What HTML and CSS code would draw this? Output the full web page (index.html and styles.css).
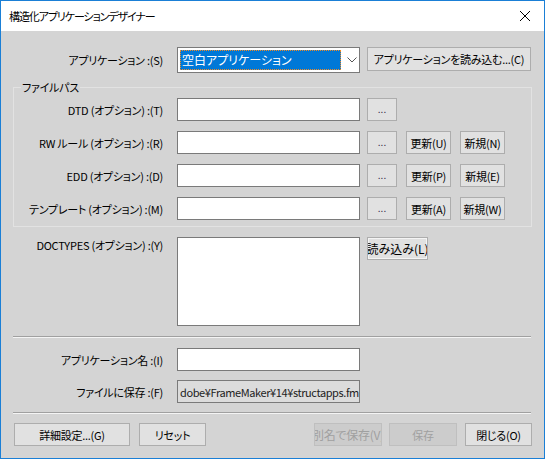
FILE: index.html
```html
<!DOCTYPE html>
<html lang="ja">
<head>
<meta charset="utf-8">
<title>構造化アプリケーションデザイナー</title>
<link rel="stylesheet" href="styles.css">
</head>
<body>
<div class="window">
  <div class="titlebar">
    <span class="title">構造化アプリケーションデザイナー</span>
    <svg class="close" width="12" height="12" viewBox="0 0 12 12"><path d="M1 1 L11 11 M11 1 L1 11" stroke="#000" stroke-width="1" fill="none"/></svg>
  </div>
  <div class="content">
    <div class="row app-row">
      <div class="label">アプリケーション :(S)</div>
      <div class="select">
        <div class="select-value">空白アプリケーション</div>
        <svg class="chevron" width="10" height="6" viewBox="0 0 10 6"><path d="M0.5 0.5 L5 5 L9.5 0.5" stroke="#555" stroke-width="1" fill="none"/></svg>
      </div>
      <div class="btn btn-load">アプリケーションを読み込む...(C)</div>
    </div>

    <div class="group">
      <div class="group-title">ファイルパス</div>
      <div class="row">
        <div class="label glabel">DTD (オプション) :(T)</div>
        <div class="field"></div>
        <div class="btn btn-dots">...</div>
      </div>
      <div class="row">
        <div class="label glabel">RW ルール (オプション) :(R)</div>
        <div class="field"></div>
        <div class="btn btn-dots">...</div>
        <div class="btn btn-upd">更新(U)</div>
        <div class="btn btn-new">新規(N)</div>
      </div>
      <div class="row">
        <div class="label glabel">EDD (オプション) :(D)</div>
        <div class="field"></div>
        <div class="btn btn-dots">...</div>
        <div class="btn btn-upd">更新(P)</div>
        <div class="btn btn-new">新規(E)</div>
      </div>
      <div class="row">
        <div class="label glabel">テンプレート (オプション) :(M)</div>
        <div class="field"></div>
        <div class="btn btn-dots">...</div>
        <div class="btn btn-upd">更新(A)</div>
        <div class="btn btn-new">新規(W)</div>
      </div>
    </div>

    <div class="row doc-row">
      <div class="label doc-label">DOCTYPES (オプション) :(Y)</div>
      <div class="listbox"></div>
      <div class="btn btn-read"><span>読み込み(L)</span></div>
    </div>

    <div class="sep sep1"></div>

    <div class="row name-row">
      <div class="label">アプリケーション名 :(I)</div>
      <div class="field"></div>
    </div>
    <div class="row file-row">
      <div class="label">ファイルに保存 :(F)</div>
      <div class="field readonly"><span class="ro-text">dobe¥FrameMaker¥14¥structapps.fm</span></div>
    </div>

    <div class="sep sep2"></div>

    <div class="footer">
      <div class="btn b-adv">詳細設定...(G)</div>
      <div class="btn b-reset">リセット</div>
      <div class="spacer"></div>
      <div class="btn disabled b-saveas"><span>別名で保存(V)</span></div>
      <div class="btn disabled b-save">保存</div>
      <div class="btn b-close">閉じる(O)</div>
    </div>
  </div>
</div>
</body>
</html>
```

FILE: styles.css
```css
html, body {
  margin: 0;
  padding: 0;
}
body {
  font-family: "Noto Sans CJK JP", "Noto Sans", sans-serif;
  font-size: 11px;
  letter-spacing: -0.25px;
  font-feature-settings: "palt";
  color: #000;
  background: #d4d4d4;
}
.window {
  width: 545px;
  height: 459px;
  box-sizing: border-box;
  border: 1px solid #1a7fd6;
  background: #d4d4d4;
  overflow: hidden;
}
.titlebar {
  height: 30px;
  background: #fff;
  display: flex;
  align-items: center;
  padding-left: 8px;
  padding-right: 13px;
}
.title {
  flex: 1;
  font-size: 11px;
  letter-spacing: -1.1px;
  line-height: 16px;
}
.close {
  display: block;
}
.content {
  padding-top: 16px;
}
.row {
  display: flex;
  align-items: center;
  height: 23px;
}
.label {
  width: 162px;
  flex: none;
  text-align: right;
  white-space: nowrap;
  margin-right: 14px;
  line-height: 16px;
}
.glabel {
  width: 149px;
}
.app-row {
  height: 26px;
  align-items: flex-start;
}
.app-row .label {
  line-height: 26px;
}
.select {
  width: 183px;
  height: 26px;
  box-sizing: border-box;
  border: 1px solid #7a7a7a;
  background: #fff;
  display: flex;
  align-items: center;
  padding: 2px;
  flex: none;
}
.select-value {
  width: 161px;
  height: 20px;
  box-sizing: border-box;
  background: #0078d7;
  color: #fff;
  border: 1px dotted #f08a24;
  line-height: 18px;
  padding-left: 1px;
  font-size: 12px;
  letter-spacing: 0;
  white-space: nowrap;
  overflow: hidden;
}
.chevron {
  margin-left: 6px;
}
.btn {
  box-sizing: border-box;
  height: 23px;
  background: #e1e1e1;
  border: 1px solid #adadad;
  display: flex;
  align-items: center;
  justify-content: center;
  white-space: nowrap;
  overflow: hidden;
  flex: none;
  line-height: 16px;
}
.btn-load {
  margin-left: 7px;
  width: 164px;
  height: 24px;
}
.field {
  width: 183px;
  height: 23px;
  box-sizing: border-box;
  border: 1px solid #7a7a7a;
  background: #fff;
  flex: none;
}
.btn-dots {
  width: 30px;
  margin-left: 7px;
  color: #3a2a4a;
  align-items: flex-end;
  padding-bottom: 3px;
  font-size: 10px;
  letter-spacing: 0;
}
.btn-upd {
  width: 45px;
  margin-left: 9px;
}
.btn-new {
  width: 45px;
  margin-left: 9px;
}
.group {
  position: relative;
  margin-top: 14px;
  margin-left: 12px;
  width: 519px;
  box-sizing: border-box;
  border: 1px solid #e2e2e2;
  padding-top: 10px;
  padding-bottom: 6px;
  display: flex;
  flex-direction: column;
  gap: 10px;
}
.group-title {
  position: absolute;
  top: -9px;
  left: 7px;
  padding: 0 1px;
  background: #d4d4d4;
  line-height: 16px;
}
.doc-row {
  margin-top: 10px;
  height: 89px;
  align-items: flex-start;
}
.doc-label {
  line-height: 16px;
  padding-top: 0;
}
.listbox {
  width: 183px;
  height: 89px;
  box-sizing: border-box;
  border: 1px solid #7a7a7a;
  background: #fff;
  flex: none;
}
.btn-read {
  width: 61px;
  margin-left: 7px;
  border-color: #adadad;
  box-shadow: inset 0 0 0 1px #f4f4f4;
  font-size: 12px;
  letter-spacing: 0;
}
.sep {
  margin-left: 12px;
  width: 518px;
  height: 0;
  border-top: 1px solid #a0a0a0;
  border-bottom: 1px solid #f4f4f4;
}
.sep1 {
  margin-top: 10px;
}
.name-row {
  margin-top: 10px;
}
.file-row {
  margin-top: 9px;
}
.readonly {
  background: #dcdcdc;
  overflow: hidden;
  display: flex;
  align-items: center;
  padding-left: 2px;
}
.ro-text {
  white-space: nowrap;
  color: #222;
  letter-spacing: -0.4px;
}
.sep2 {
  margin-top: 9px;
}
.footer {
  display: flex;
  margin-top: 9px;
  padding-left: 13px;
  padding-right: 12px;
}
.spacer {
  flex: 1;
}
.b-adv {
  width: 116px;
}
.b-reset {
  width: 67px;
  margin-left: 9px;
}
.b-saveas {
  width: 68px;
  font-size: 12px;
}
.b-save {
  width: 68px;
  margin-left: 7px;
}
.b-close {
  width: 67px;
  margin-left: 8px;
}
.disabled {
  background: #cccccc;
  border-color: #bfbfbf;
  color: #a0a0a0;
}
```
